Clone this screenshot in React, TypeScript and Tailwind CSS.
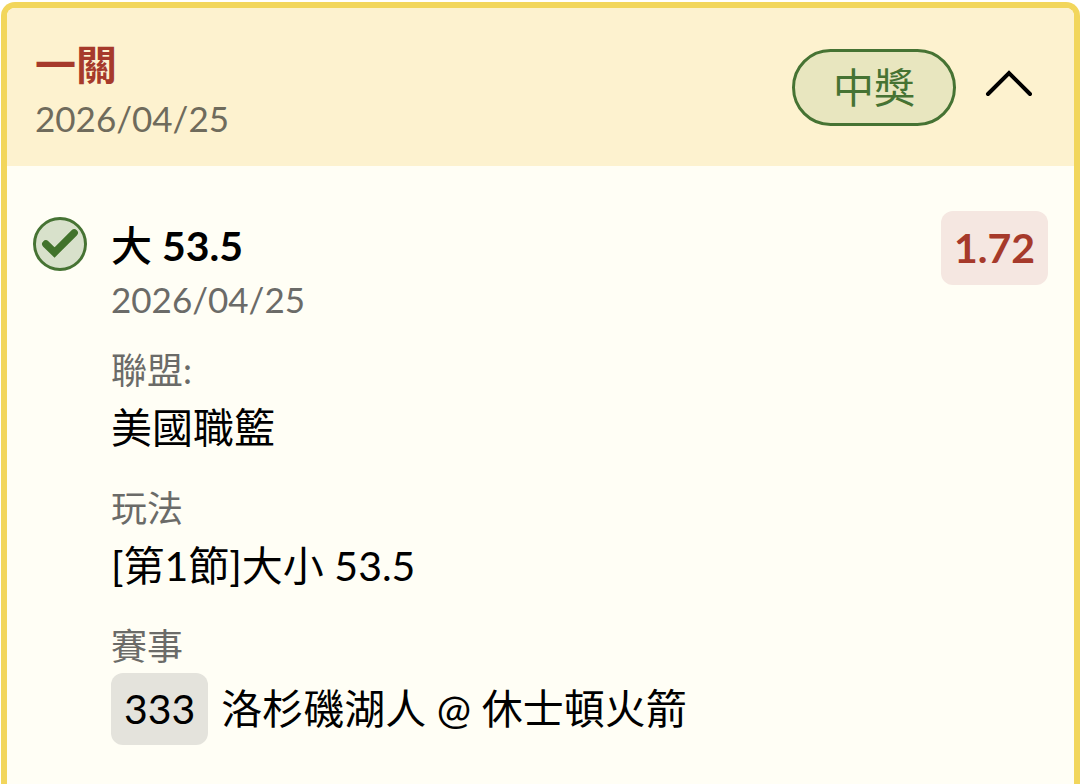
import React, { useState } from 'react';

interface DetailProps {
  label: string;
  children: React.ReactNode;
}

const Detail: React.FC<DetailProps> = ({ label, children }) => {
  return (
    <div>
      <dt className="text-[36px] leading-[54px] text-[#6b6b68]">{label}</dt>
      <dd className="text-[41px] leading-[62px] text-black">{children}</dd>
    </div>
  );
};

const CheckIcon: React.FC = () => (
  <svg className="w-[54px] h-[54px] shrink-0" viewBox="0 0 54 54" fill="none" aria-hidden="true">
    <circle cx="27" cy="27" r="25.5" fill="#d8e1cb" stroke="#467333" strokeWidth="3" />
    <path d="M12.8 27L21.5 35.5L41.2 15.8" stroke="#41732b" strokeWidth="7.4" strokeLinecap="round" />
  </svg>
);

const ChevronIcon: React.FC<{ open: boolean }> = ({ open }) => (
  <svg
    className={open ? 'w-[48px] h-[32px]' : 'w-[48px] h-[32px] rotate-180'}
    viewBox="0 0 48 32"
    fill="none"
    aria-hidden="true"
  >
    <path d="M3 27L24 6L45 27" stroke="#000" strokeWidth="4" strokeLinecap="round" />
  </svg>
);

const App: React.FC = () => {
  const [open, setOpen] = useState(true);

  return (
    <main className="min-h-screen bg-white pt-[2px] pl-px flex flex-col font-['Lato','Noto_Sans_CJK_TC',sans-serif]">
      <article className="grow bg-[#fffef5] border-[6px] border-b-0 border-[#f2d65c] rounded-t-[14px] overflow-hidden">
        <header className="flex items-center justify-between bg-[#fdf2cf] pl-7 pr-[41px] pt-[30px] pb-[22px]">
          <div>
            <h1 className="text-[41px] leading-[54px] font-bold text-[#a63a2b]">一關</h1>
            <time className="block text-[35px] leading-[52px] text-[#6f6b5c]" dateTime="2026-04-25">2026/04/25</time>
          </div>
          <div className="flex items-center gap-[29px] mb-2">
            <span className="rounded-full border-[3px] border-[#467333] bg-[#e8e6bf] px-[38px] text-[41px] leading-[71px] text-[#467333]">
              中獎
            </span>
            <button
              type="button"
              aria-label="收合"
              aria-expanded={open}
              onClick={() => setOpen(!open)}
              className="cursor-pointer mb-2"
            >
              <ChevronIcon open={open} />
            </button>
          </div>
        </header>

        {open && (
          <section className="flex items-start px-[26px] pt-[45px] pb-10">
            <div className="pt-[6px] mr-6">
              <CheckIcon />
            </div>
            <div className="grow">
              <div className="pt-2">
                <h2 className="text-[41px] leading-[54px] font-bold text-black">
                  <span className="font-medium">大</span> 53.5
                </h2>
                <time className="block text-[35px] leading-[52px] text-[#6b6b68]" dateTime="2026-04-25">2026/04/25</time>
              </div>
              <dl className="mt-[18px] flex flex-col gap-[22px]">
                <Detail label="聯盟:">美國職籃</Detail>
                <Detail label="玩法">[第1節]大小 53.5</Detail>
                <Detail label="賽事">
                  <div className="flex items-center gap-[13px]">
                    <span className="rounded-xl bg-[#e4e3dc] px-[13px] leading-[72px]">333</span>
                    <span>洛杉磯湖人 @ 休士頓火箭</span>
                  </div>
                </Detail>
              </dl>
            </div>
            <strong className="rounded-xl bg-[#f5e7e1] px-[13px] text-[41px] leading-[74px] font-bold text-[#a63a2b]">
              1.72
            </strong>
          </section>
        )}
      </article>
    </main>
  );
};

export default App;
